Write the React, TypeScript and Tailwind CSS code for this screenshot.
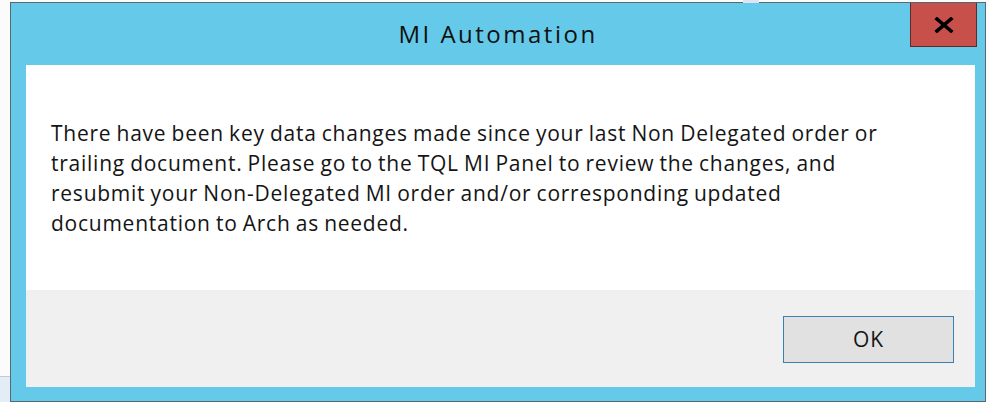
const LINES = [
  'There have been key data changes made since your last Non Delegated order or',
  'trailing document. Please go to the TQL MI Panel to review the changes, and',
  'resubmit your Non-Delegated MI order and/or corresponding updated',
  'documentation to Arch as needed.',
];

// Thick "x" glyph used on the close button
function CloseGlyph() {
  return (
    <svg width="20" height="16" viewBox="0 0 20 16" aria-hidden="true">
      <path d="M3 2 L17 14 M17 2 L3 14" stroke="#000" strokeWidth="3.6" strokeLinecap="square" />
    </svg>
  );
}

export default function App() {
  return (
    <div className="relative w-[989px] h-[402px] overflow-hidden bg-[#fbfbfb] font-['Open_Sans',sans-serif]">
      {/* bits of the desktop peeking out behind the dialog */}
      <div className="absolute left-0 top-[376px] w-[10px] h-px bg-[#c9c9c9]" />
      <div className="absolute left-0 top-[377px] w-[10px] h-[25px] bg-[#e4ecf6]" />
      <div className="absolute left-[743px] top-0 w-[16px] h-[3px] bg-[#dce6f2]" />

      <div className="ml-[10px] mt-[2px] w-[976px] h-[400px] border border-[#5b6770] bg-[#65c9e9] flex flex-col">
        {/* title bar */}
        <div className="relative h-[62px] shrink-0 flex justify-center">
          <span className="mt-[16px] text-[24px] leading-[30px] tracking-[2.5px] text-[#111]">MI Automation</span>
          <button className="absolute right-[8px] top-0 w-[67px] h-[44px] bg-[#c7504a] border border-[#5e2b27] border-t-0 flex items-center justify-center">
            <CloseGlyph />
          </button>
        </div>

        {/* client area */}
        <div className="ml-[15px] mr-[10px] flex flex-col h-[322px]">
          <div className="h-[225px] bg-white pl-[25px] pt-[53px] text-[21px] leading-[30px] tracking-[0.75px] [word-spacing:-1px] text-[#141414]">
            {LINES.map((line) => (
              <div key={line} className="whitespace-nowrap">
                {line}
              </div>
            ))}
          </div>
          <div className="flex-1 bg-[#f0f0f0] flex justify-end items-start pt-[26px] pr-[21px]">
            <button className="w-[171px] h-[47px] bg-[#e1e1e1] border border-[#3c7fb1] text-[21px] tracking-[1px] text-[#141414]">
              OK
            </button>
          </div>
        </div>
      </div>
    </div>
  );
}
